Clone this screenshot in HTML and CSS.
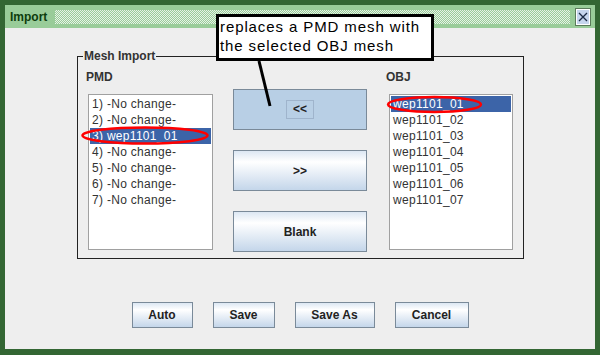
FILE: index.html
```html
<!DOCTYPE html>
<html lang="en">
<head>
    <meta charset="UTF-8">
    <title>Import</title>
    <link rel="stylesheet" href="styles.css">
</head>
<body>

    <div class="window">
        <!-- Title bar -->
        <div class="titlebar">
            <span class="title">Import</span>
            <div class="grip"></div>
            <div class="close-btn">
                <svg width="12" height="12" viewBox="0 0 12 12">
                    <path d="M2 2 L10 10 M10 2 L2 10" stroke="#1a2a44" stroke-width="1.3"/>
                </svg>
            </div>
        </div>

        <div class="content">
            <fieldset class="group">
                <legend>Mesh Import</legend>

                <div class="column">
                    <div class="col-label">PMD</div>
                    <ul class="list">
                        <li>1) -No change-</li>
                        <li>2) -No change-</li>
                        <li class="selected">3) wep1101_01</li>
                        <li>4) -No change-</li>
                        <li>5) -No change-</li>
                        <li>6) -No change-</li>
                        <li>7) -No change-</li>
                    </ul>
                </div>

                <div class="middle">
                    <button class="big-btn pressed"><span class="focus">&lt;&lt;</span></button>
                    <button class="big-btn">&gt;&gt;</button>
                    <button class="big-btn">Blank</button>
                </div>

                <div class="column obj">
                    <div class="col-label">OBJ</div>
                    <ul class="list">
                        <li class="selected">wep1101_01</li>
                        <li>wep1101_02</li>
                        <li>wep1101_03</li>
                        <li>wep1101_04</li>
                        <li>wep1101_05</li>
                        <li>wep1101_06</li>
                        <li>wep1101_07</li>
                    </ul>
                </div>
            </fieldset>

            <div class="actions">
                <button class="btn btn-auto">Auto</button>
                <button class="btn btn-save">Save</button>
                <button class="btn btn-saveas">Save As</button>
                <button class="btn btn-cancel">Cancel</button>
            </div>
        </div>
    </div>

    <!-- Annotation callout -->
    <div class="callout">replaces a PMD mesh with<br>the selected OBJ mesh</div>

    <svg class="marks" width="600" height="355" viewBox="0 0 600 355">
        <line x1="259" y1="61" x2="270" y2="106" stroke="#000" stroke-width="3"/>
        <ellipse cx="145" cy="135.5" rx="62.5" ry="8" fill="none" stroke="#ff0000" stroke-width="2.5"/>
        <ellipse cx="434.5" cy="104.5" rx="46.5" ry="7.5" fill="none" stroke="#ff0000" stroke-width="2.5"/>
    </svg>

</body>
</html>
```

FILE: styles.css
```css
body {
    margin: 0;
    font-family: "Liberation Sans", Arial, sans-serif;
    font-size: 12px;
    color: #333;
    position: relative;
    width: 600px;
    height: 355px;
    overflow: hidden;
}
.window {
    width: 600px;
    height: 355px;
    box-sizing: border-box;
    border: 5px solid #336633;
    border-bottom-width: 6px;
    background-color: #eeeeee;
    display: flex;
    flex-direction: column;
}
.titlebar {
    height: 23px;
    background-color: #99cc99;
    display: flex;
    align-items: center;
    padding-left: 5px;
    padding-right: 5px;
}
.title {
    font-weight: bold;
    color: #0d3d0d;
}
.grip {
    flex: 1;
    height: 14px;
    margin-left: 8px;
    margin-right: 6px;
    background-image: conic-gradient(#ffffff 0 25%, transparent 0 50%, #ffffff 0 75%, transparent 0);
    background-size: 2px 2px;
    opacity: 0.75;
}
.close-btn {
    width: 12px;
    height: 14px;
    border: 1px solid #ffffff;
    outline: 1px solid #5a7a5a;
    background-color: #c6d6ee;
    display: flex;
    align-items: center;
    justify-content: center;
}
.content {
    flex: 1;
    display: flex;
    flex-direction: column;
}
.group {
    margin: 21px 0 0 72px;
    width: 447px;
    height: 210px;
    box-sizing: border-box;
    border: 1px solid #222;
    padding: 0 10px 0 8px;
    display: flex;
    align-items: flex-start;
    min-inline-size: 0;
}
.group legend {
    font-weight: bold;
    padding: 0 1px;
    margin-left: -3px;
    line-height: 14px;
}
.column {
    width: 127px;
    flex-shrink: 0;
}
.col-label {
    font-weight: bold;
    line-height: 14px;
    margin-top: 7px;
}
.list {
    list-style: none;
    margin: 10px 0 0 2px;
    padding: 1px;
    height: 152px;
    border: 1px solid #a0a0a0;
    background-color: #fff;
}
.obj .list {
    margin-left: 3px;
}
.list li {
    height: 16px;
    line-height: 16px;
    padding-left: 2px;
    letter-spacing: 0.3px;
}
.list li.selected {
    background-color: #3c64a8;
    color: #fff;
}
.middle {
    width: 134px;
    flex-shrink: 0;
    margin-left: 20px;
    margin-top: 26px;
    display: flex;
    flex-direction: column;
    gap: 20px;
}
.obj {
    margin-left: 19px;
}
.big-btn, .btn {
    font-family: "Liberation Sans", Arial, sans-serif;
    font-weight: bold;
    font-size: 12px;
    color: #222;
    border: 1px solid #7a8a99;
    background: linear-gradient(#dce7f3 0%, #ffffff 28%, #c4d6ea 100%);
    padding: 0;
}
.big-btn {
    height: 41px;
}
.big-btn.pressed {
    background: #b8cfe5;
}
.focus {
    display: inline-block;
    width: 26px;
    height: 17px;
    line-height: 17px;
    border: 1px solid #9fb4cc;
}
.actions {
    display: flex;
    justify-content: center;
    gap: 20px;
    margin-top: 43px;
}
.btn {
    height: 26px;
}
.btn-auto { width: 61px; }
.btn-save { width: 62px; }
.btn-saveas { width: 80px; }
.btn-cancel { width: 74px; }
.callout {
    position: absolute;
    left: 216px;
    top: 14px;
    width: 211px;
    height: 41px;
    border: 3px solid #000;
    background-color: #fff;
    color: #000;
    font-size: 15px;
    letter-spacing: 0.9px;
    line-height: 19px;
    padding-left: 1px;
    white-space: nowrap;
}
.marks {
    position: absolute;
    left: 0;
    top: 0;
    pointer-events: none;
}
```
